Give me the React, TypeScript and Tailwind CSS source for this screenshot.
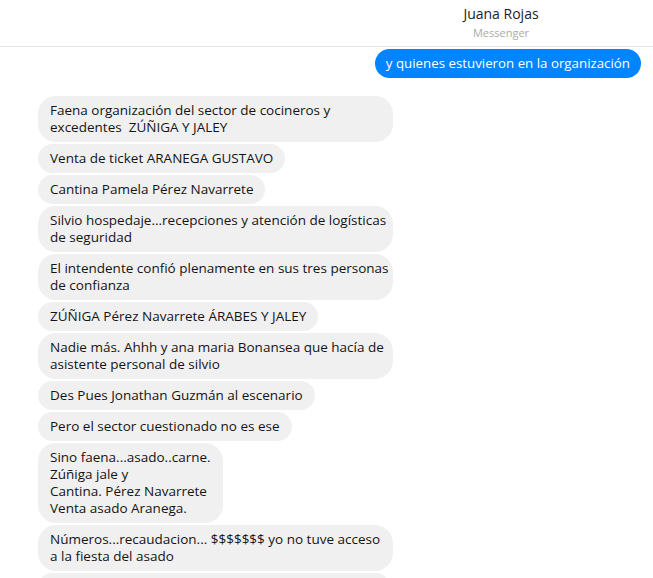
import React from "react";

const font = { fontFamily: '"Open Sans", "Noto Sans", sans-serif' };

type Msg = { lines: string[]; wide?: boolean };

const msgs: Msg[] = [
  { lines: ["Faena organización del sector de cocineros y", "excedentes  ZÚÑIGA Y JALEY"], wide: true },
  { lines: ["Venta de ticket ARANEGA GUSTAVO"] },
  { lines: ["Cantina Pamela Pérez Navarrete"] },
  { lines: ["Silvio hospedaje...recepciones y atención de logísticas", "de seguridad"], wide: true },
  { lines: ["El intendente confió plenamente en sus tres personas", "de confianza"], wide: true },
  { lines: ["ZÚÑIGA Pérez Navarrete ÁRABES Y JALEY"] },
  { lines: ["Nadie más. Ahhh y ana maria Bonansea que hacía de", "asistente personal de silvio"], wide: true },
  { lines: ["Des Pues Jonathan Guzmán al escenario"] },
  { lines: ["Pero el sector cuestionado no es ese"] },
  { lines: ["Sino faena...asado..carne.", "Zúñiga jale y", "Cantina. Pérez Navarrete", "Venta asado Aranega."] },
  { lines: ["Números...recaudacion... $$$$$$$ yo no tuve acceso", "a la fiesta del asado"], wide: true },
];

export default function App() {
  return (
    <div className="w-[653px] h-[578px] overflow-hidden bg-white" style={font}>
      <div className="h-[47px] border-b border-[#e5e5e5] flex flex-col items-center pl-[349px] pt-[5px]">
        <div className="text-[14px] leading-[18px] text-[#1d2129]">Juana Rojas</div>
        <div className="text-[11px] leading-[14px] text-[#aaaaaa] mt-[3px]">Messenger</div>
      </div>
      <div className="flex justify-end pr-[12px] pt-[2px]">
        <div className="bg-[#0084ff] text-white rounded-full px-[11px] py-[5px] text-[13.3px] leading-[18.5px] whitespace-nowrap">
          y quienes estuvieron en la organización
        </div>
      </div>
      <div className="flex flex-col items-start gap-[2px] pl-[38px] pt-[18px]">
        {msgs.map((m, i) => (
          <div
            key={i}
            className={
              "bg-[#f1f0f0] text-[#141414] rounded-[18px] px-[12px] py-[6px] text-[13.5px] leading-[17px] whitespace-nowrap " +
              (m.wide ? "w-[355px]" : "")
            }
          >
            {m.lines.map((l, j) => (
              <div key={j} className="whitespace-pre">{l}</div>
            ))}
          </div>
        ))}
        <div className="bg-[#f1f0f0] rounded-[18px] w-[352px] h-[29px]" />
      </div>
    </div>
  );
}
